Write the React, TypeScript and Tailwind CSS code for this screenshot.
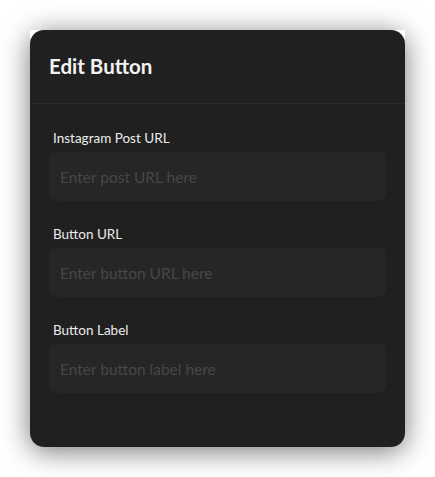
export default function App() {
  const fields = [
    { label: "Instagram Post URL", placeholder: "Enter post URL here" },
    { label: "Button URL", placeholder: "Enter button URL here" },
    { label: "Button Label", placeholder: "Enter button label here" },
  ];

  return (
    <div className="min-h-[477px] bg-white p-[30px] font-['Lato',sans-serif]">
      <div className="relative">
        {/* shadow layer, then white strip hides it behind the square top corners */}
        <div className="absolute inset-0 rounded-[14px] shadow-[0_4px_28px_rgba(0,0,0,0.55)]" />
        <div className="absolute inset-x-0 top-0 h-4 bg-white" />
        <div className="relative h-[417px] overflow-hidden rounded-[14px] bg-[#202020]">
          <div className="flex h-[74px] items-center border-b border-[#2a2a2a] px-[19px]">
            <h2 className="text-[20.5px] font-bold text-[#f2f2f2]">Edit Button</h2>
          </div>
          <div className="flex flex-col gap-[24px] px-[19px] pt-[25px]">
            {fields.map((f) => (
              <div key={f.label} className="flex flex-col gap-[5px]">
                <label className="pl-1 text-[13.5px] leading-[18px] text-[#ececec]">{f.label}</label>
                <input
                  placeholder={f.placeholder}
                  className="h-[49px] rounded-[8px] bg-[#262626] px-[11px] text-[15.5px] text-white outline-none placeholder:text-[#474747]"
                />
              </div>
            ))}
          </div>
        </div>
      </div>
    </div>
  );
}
